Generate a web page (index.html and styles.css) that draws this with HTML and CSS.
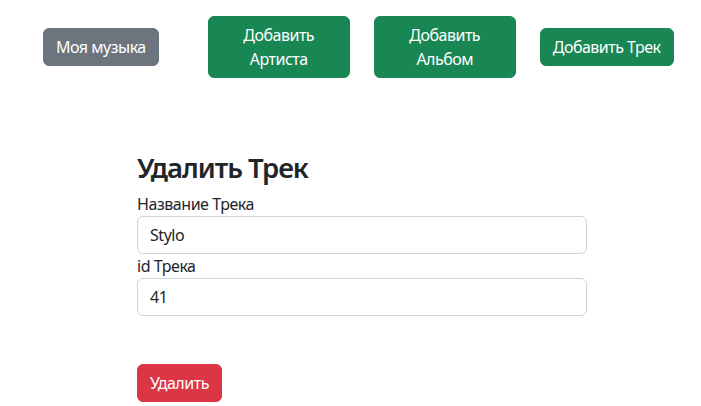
FILE: index.html
```html
<!DOCTYPE html>
<html lang="ru">
<head>
<meta charset="utf-8">
<title>Удалить Трек</title>
<link rel="stylesheet" href="styles.css">
</head>
<body>
<nav class="topnav">
  <a class="btn btn-gray">Моя музыка</a>
  <a class="btn btn-green btn-wide first">Добавить Артиста</a>
  <a class="btn btn-green btn-wide">Добавить Альбом</a>
  <a class="btn btn-green">Добавить Трек</a>
</nav>
<main class="form-wrap">
  <h2 class="title">Удалить Трек</h2>
  <label class="label" for="name">Название Трека</label>
  <input class="input" id="name" type="text" value="Stylo">
  <label class="label" for="tid">id Трека</label>
  <input class="input" id="tid" type="text" value="41">
  <div class="actions">
    <button class="btn btn-red" type="button">Удалить</button>
  </div>
</main>
</body>
</html>
```
FILE: styles.css
```css
* { box-sizing: border-box; }
body {
  margin: 0;
  font-family: "Noto Sans", "Open Sans", sans-serif;
  font-size: 16px;
  line-height: 1.5;
  letter-spacing: -0.45px;
  color: #212529;
  background: #fff;
}
.topnav {
  display: flex;
  align-items: center;
  padding: 16px 0 0 43px;
}
.btn {
  display: inline-block;
  padding: 6px 12px;
  border: 1px solid transparent;
  border-radius: 6px;
  font-family: inherit;
  font-size: 16px;
  line-height: 24px;
  letter-spacing: -0.5px;
  color: #fff;
  text-align: center;
  text-decoration: none;
  cursor: pointer;
}
.btn + .btn { margin-left: 24px; }
.btn.first { margin-left: 49px; }
.btn-gray { background: #6c757d; border-color: #6c757d; }
.btn-green { background: #198754; border-color: #198754; }
.btn-red { background: #dc3545; border-color: #dc3545; }
.btn-wide { width: 142px; }
.form-wrap {
  width: 450px;
  margin: 73px 0 0 137px;
  display: flex;
  flex-direction: column;
}
.title {
  margin: 0 0 8px;
  font-size: 27.5px;
  font-weight: 600;
  line-height: 1.2;
  letter-spacing: -1px;
}
.label { display: block; }
.input {
  display: block;
  width: 100%;
  height: 38px;
  padding: 6px 12px;
  font-family: inherit;
  font-size: 16px;
  line-height: 24px;
  letter-spacing: -0.45px;
  color: #212529;
  border: 1px solid #ced4da;
  border-radius: 6px;
  background: #fff;
}
.actions { margin-top: 48px; }
```
